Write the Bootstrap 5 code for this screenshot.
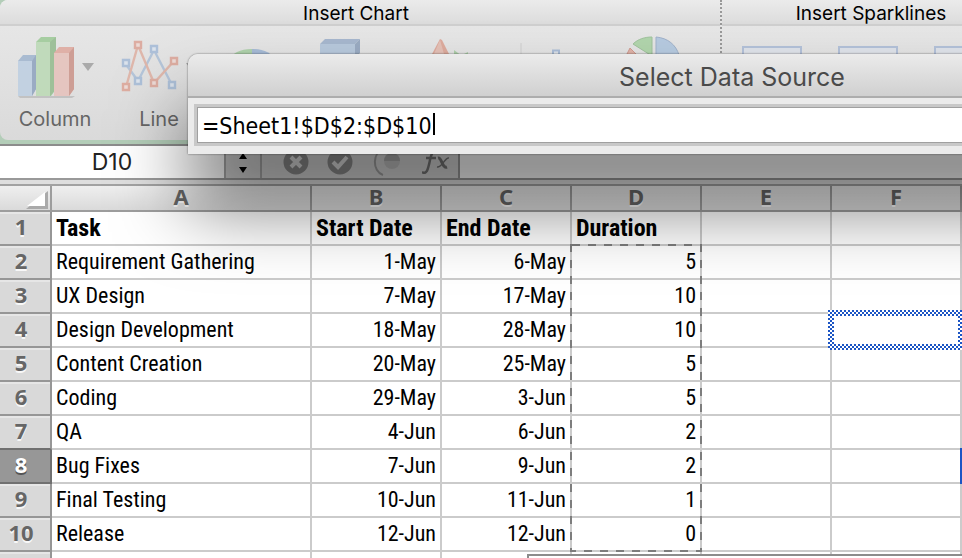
<!DOCTYPE html>
<html lang="en">
<head>
<meta charset="utf-8">
<meta name="viewport" content="width=device-width, initial-scale=1">
<title>Select Data Source</title>
<link href="https://cdn.jsdelivr.net/npm/bootstrap@5.3.0/dist/css/bootstrap.min.css" rel="stylesheet">
<style>
body{font-family:Inter,"Liberation Sans",sans-serif;color:#000}
.app{height:100vh}
.ribbon{background:#b3cdb8;border-bottom:2px solid #8c8c8c;height:146px;padding-bottom:4px}
.ribbon-groups{background:linear-gradient(#e9e9e9,#dadada);border-radius:8px;overflow:hidden;min-width:1020px}
.group-chart{flex:0 0 720px;min-width:0;overflow:hidden}
.group-spark{flex:1 0 300px;border-left:2px dotted #999}
.group-title{height:26px;font-size:19px;line-height:28px;background:linear-gradient(#ebebeb,#dcdcdc);border-bottom:2px solid #cfcfcf}
.tool{flex:0 0 104px;background:none;border:0;padding:10px 0 0 4px;color:#666;font-size:20px;line-height:26px}
.tool .glyph{width:60px;height:62px;overflow:visible;opacity:.9}
.tool .arrow{width:12px;height:8px;margin-left:6px}
.tool-text{width:78px;padding-top:8px}
.formula-bar{height:34px;border-bottom:2px solid #999;background:#fff}
.name-box{width:224px;font-size:23px;padding-top:2px;color:#222}
.spin{width:38px;background:#d4d4d4;border:0;border-left:2px solid #a8a8a8;border-right:2px solid #a8a8a8}
.fx-tools{width:198px;background:#d6d6d6;border-right:2px solid #999;padding-left:20px}
.fx-tools button{width:28px;height:28px}
.splitter{height:6px;background:#dedede;border-bottom:2px solid #a2a2a2}
.sheet{table-layout:fixed;border-collapse:separate;border-spacing:0;font:22px/32px "Roboto Condensed",Roboto,sans-serif}
.sheet td,.sheet .field{height:34px;border-right:2px solid #cbcbcb;border-bottom:2px solid #cbcbcb;padding:0 4px;white-space:nowrap;background:#fff}
.sheet .field{font-size:24px}
.sheet td.num{text-align:right}
.sheet .letter{height:26px;background:linear-gradient(#efefef,#dadada);border-right:2px solid #9d9d9d;border-bottom:2px solid #9d9d9d}
.sheet .letter,.sheet .rownum{font:bold 22px/20px "Noto Sans","Open Sans",sans-serif;color:#666;text-align:center;padding:0 0 4px;text-shadow:0 2px 0 #f8f8f8}
.sheet .rownum{height:34px;line-height:28px;background:#d9d9d9;border-right:2px solid #969696;border-bottom:2px solid #969696;padding-right:8px;box-shadow:inset 0 2px #e6e6e6}
.sheet .before-active{border-bottom-color:#707070}
.sheet .active-row{background:#979797;color:#fff;text-shadow:0 2px 0 #555;border-color:#707070;box-shadow:none}
.c-head{width:52px}.c-task{width:260px}.c-col{width:130px}
.corner{width:22px;height:18px;margin:4px 2px 0 auto}
.sheet .corner-cell{padding:0}
.ants{left:-2px;top:-2px;width:132px;height:308px;z-index:1}
.target{left:-4px;top:-4px;width:136px;height:40px;z-index:1}
.edge-mark{right:-2px;top:-2px;width:2px;height:36px;background:#1c55c4}
.dialog-sheet{left:188px;right:-314px;top:54px;background:#ebebeb;border-radius:10px 10px 0 0;box-shadow:0 0 2px rgba(0,0,0,.6),0 54px 72px rgba(0,0,0,.5);padding-bottom:8px;z-index:5}
.dialog-title{height:44px;font-size:25px;line-height:46px;font-weight:400;color:#4a4a4a;background:linear-gradient(#ebebeb,#d0d0d0);border-bottom:2px solid #adadad;border-radius:10px 10px 0 0}
.range-box{margin:6px 6px 0;border:3px solid #c8c8c8;height:42px}
.range-box input{width:100%;height:100%;border:1px solid #a0a0a0;padding:2px 4px 0;font:23px/30px "DejaVu Sans Condensed","DejaVu Sans",sans-serif;color:#000;outline:0}
.caret{left:236px;top:6px;width:2px;height:22px;background:#000}
.lower-panel{left:527px;right:-20px;top:554px;height:20px;border:2px solid #8c8c8c;background:#fff;z-index:4}
</style>
<script src="https://cdn.jsdelivr.net/npm/bootstrap@5.3.0/dist/js/bootstrap.bundle.min.js"></script>
</head>
<body class="overflow-hidden">
<main class="app position-relative overflow-hidden">
  <header class="ribbon overflow-hidden">
    <div class="ribbon-groups d-flex h-100">
      <section class="group-chart">
        <div class="group-title text-center pe-2">Insert Chart</div>
        <div class="d-flex ps-2 ms-1">
          <button class="tool d-flex flex-column">
            <span class="d-flex align-items-center">
              <svg class="glyph" viewBox="0 0 60 62">
                <path d="M2 60h57l-3 2H4z" fill="#aaa" opacity=".6"/>
                <path d="M2 25l5-6h13v34l-4 7H2z" fill="#a3b7d0"/><path d="M2 25h14v35H2z" fill="#bfd0e2"/><path d="M16 25l4-6v34l-4 7z" fill="#93a6c0"/>
                <path d="M20 6l5-5h15v52l-5 7H20z" fill="#a0cb9a"/><path d="M20 6h14v54H20z" fill="#bddab7"/><path d="M34 6l6-5v52l-6 7z" fill="#97bd92"/>
                <path d="M38 17l5-6h15v42l-5 7H38z" fill="#dfaba1"/><path d="M38 17h15v43H38z" fill="#e6c3bd"/><path d="M53 17l5-6v42l-5 7z" fill="#cc978d"/>
              </svg>
              <svg class="arrow" viewBox="0 0 12 8"><path d="M0 0h12L6 8z" fill="#aaa"/></svg>
            </span>
            <span class="tool-text text-center">Column</span>
          </button>
          <button class="tool d-flex flex-column">
            <span class="d-flex align-items-center">
              <svg class="glyph" viewBox="0 0 60 62" fill="none" stroke-width="2.4">
                <path d="M5 27l13 18L34 14l18 35" stroke="#b0c2d9"/><path d="M6 51L18 9l16 38 20-22" stroke="#dfb3a6"/>
                <g fill="#dce4ee" stroke="#a8bdd8"><path d="M3 24h6v6H3zM15 42h6v6h-6zM31 10h6v6h-6zM49 46h6v6h-6z"/></g>
                <g fill="#eedbd6" stroke="#dda89b"><path d="M3 48h6v6H3zM15 6h6v6h-6zM31 44h6v6h-6zM51 22h6v6h-6z"/></g>
              </svg>
              <svg class="arrow" viewBox="0 0 12 8"><path d="M0 0h12L6 8z" fill="#aaa"/></svg>
            </span>
            <span class="tool-text text-center">Line</span>
          </button>
          <button class="tool d-flex" aria-label="Pie">
            <svg class="glyph" viewBox="0 0 60 62"><path d="M28 38V13C16 13 8 17 4 25z" fill="#a9cfa5"/><path d="M28 38V13c12 0 20 4 24 12z" fill="#9fb6d4"/><path d="M28 38L4 22v16z" fill="#dca79c"/></svg>
          </button>
          <button class="tool d-flex" aria-label="Bar">
            <svg class="glyph" viewBox="0 0 60 62"><path d="M-8 8l5-5h35l-5 5z" fill="#a0b3cc"/><path d="M-8 8h35v14H-8z" fill="#b3c6dc"/><path d="M27 8l5-5v14l-5 5z" fill="#92a5bf"/></svg>
          </button>
          <button class="tool d-flex" aria-label="Area">
            <svg class="glyph" viewBox="0 0 60 62"><path d="M0 18L8 3l2 1 7 14z" fill="#dda596"/><path d="M2 18L8 4l4 14z" fill="#e5bdb2"/><path d="M22 14l8 6h-8zM36 16l-4 2h4z" fill="#a9cda5"/></svg>
          </button>
          <button class="tool d-flex" aria-label="Scatter">
            <svg class="glyph" viewBox="0 0 60 62"><path d="M-15 7v20" stroke="#ccc"/><path d="M17 14.500h6v6h-6z" fill="#e1e7ef" stroke="#a3b8d5" stroke-width="2"/></svg>
          </button>
          <button class="tool d-flex" aria-label="Other">
            <svg class="glyph" viewBox="0 0 60 62"><path d="M12 20L-7 8C-2 3 5 1 12 1z" fill="#acd4a7" stroke="#98bf95"/><path d="M16 20V1c12 1 20 8 23 18z" fill="#b2c8e0" stroke="#98acc8"/><path d="M-14 20l4-8 9 9z" fill="#e0aea2" stroke="#ce9487"/></svg>
          </button>
        </div>
      </section>
      <section class="group-spark">
        <div class="group-title text-center">Insert Sparklines</div>
        <div class="d-flex ps-3">
          <svg width="250" height="60" fill="#dfe3ea" stroke="#b3c1d9" stroke-width="2"><path d="M5 21h58v38H5zM101 21h58v38h-58zM197 21h58v38h-58z"/></svg>
        </div>
      </section>
    </div>
  </header>

  <div class="formula-bar d-flex">
    <input class="name-box border-0 text-center" value="D10" aria-label="Name box">
    <button class="spin flex-shrink-0 p-0" aria-label="Name list"><svg width="10" height="24" viewBox="0 0 10 24"><path d="M1 8l4-6 4 6zM1 16h8l-4 6z"/></svg></button>
    <div class="fx-tools d-flex align-items-center flex-shrink-0">
      <button class="border-0 bg-transparent p-0" aria-label="Cancel"><svg width="26" height="26" viewBox="0 0 26 26"><circle cx="13" cy="13" r="12.500" fill="#8d8d8d"/><path d="M8 8l10 10M18 8L8 18" stroke="#dedede" stroke-width="4"/></svg></button>
      <button class="border-0 bg-transparent p-0 ms-3" aria-label="Enter"><svg width="26" height="26" viewBox="0 0 26 26"><circle cx="13" cy="13" r="12.500" fill="#8d8d8d"/><path d="M6 13l5 5 9-10" fill="none" stroke="#dedede" stroke-width="4"/></svg></button>
      <button class="border-0 bg-transparent p-0 ms-3" aria-label="Formula options"><svg width="36" height="28" viewBox="0 0 36 28"><path d="M14 1C2 4 2 23 13 27" fill="none" stroke="#a0a0a0" stroke-width="2"/><circle cx="22" cy="13" r="8" fill="#c2c2c2"/><path d="M14 13h16a8 8 0 0 0-16 0z" fill="#aaa"/></svg></button>
      <button class="border-0 bg-transparent p-0 ms-4" aria-label="Function"><svg width="28" height="26" viewBox="0 0 28 26" fill="none" stroke="#777"><path d="M0 23c5 3 6-3 8-12S12 0 17 3M4 9h10" stroke-width="2.500"/><path d="M16 9c4-1 4 11 9 9" stroke-width="3"/><path d="M27 9c-4-1-7 10-12 9" stroke-width="1.500"/></svg></button>
    </div>
    <input class="flex-grow-1 border-0" aria-label="Formula bar">
  </div>
  <div class="splitter"></div>

  <table class="sheet w-100">
    <colgroup><col class="c-head"><col class="c-task"><col class="c-col"><col class="c-col"><col class="c-col"><col class="c-col"><col></colgroup>
    <thead>
      <tr><th class="letter corner-cell"><svg class="corner d-block" viewBox="0 0 22 18"><path d="M0 18L22 0v18z" fill="#aaa"/><path d="M1 15L19 1v14z" fill="#fff"/></svg></th><th class="letter">A</th><th class="letter">B</th><th class="letter">C</th><th class="letter">D</th><th class="letter">E</th><th class="letter">F</th></tr>
    </thead>
    <tbody>
      <tr><th class="rownum">1</th><th class="field">Task</th><th class="field">Start Date</th><th class="field">End Date</th><th class="field">Duration</th><td></td><td></td></tr>
      <tr><th class="rownum">2</th><td>Requirement Gathering</td><td class="num">1-May</td><td class="num">6-May</td><td class="num position-relative">5<svg class="ants position-absolute" viewBox="0 0 132 308"><path d="M1 0v307h130V0M2 1h129" fill="none" stroke="#7d7d7d" stroke-width="2" stroke-dasharray="8 8"/></svg></td><td></td><td></td></tr>
      <tr><th class="rownum">3</th><td>UX Design</td><td class="num">7-May</td><td class="num">17-May</td><td class="num">10</td><td></td><td></td></tr>
      <tr><th class="rownum">4</th><td>Design Development</td><td class="num">18-May</td><td class="num">28-May</td><td class="num">10</td><td></td><td class="position-relative"><svg class="target position-absolute" viewBox="0 0 136 40" shape-rendering="crispEdges"><defs><pattern id="checks" width="4" height="4" patternUnits="userSpaceOnUse"><path d="M0 0h4v4H0z" fill="#fff"/><path d="M0 0h2v2H0zM2 2h2v2H2z" fill="#1c55c4"/></pattern></defs><path d="M0 0h136v40H0zM6 6v28h124V6z" fill="url(#checks)" fill-rule="evenodd"/></svg></td></tr>
      <tr><th class="rownum">5</th><td>Content Creation</td><td class="num">20-May</td><td class="num">25-May</td><td class="num">5</td><td></td><td></td></tr>
      <tr><th class="rownum">6</th><td>Coding</td><td class="num">29-May</td><td class="num">3-Jun</td><td class="num">5</td><td></td><td></td></tr>
      <tr><th class="rownum before-active">7</th><td>QA</td><td class="num">4-Jun</td><td class="num">6-Jun</td><td class="num">2</td><td></td><td></td></tr>
      <tr><th class="rownum active-row">8</th><td>Bug Fixes</td><td class="num">7-Jun</td><td class="num">9-Jun</td><td class="num">2</td><td></td><td class="position-relative"><span class="edge-mark position-absolute"></span></td></tr>
      <tr><th class="rownum">9</th><td>Final Testing</td><td class="num">10-Jun</td><td class="num">11-Jun</td><td class="num">1</td><td></td><td></td></tr>
      <tr><th class="rownum">10</th><td>Release</td><td class="num">12-Jun</td><td class="num">12-Jun</td><td class="num">0</td><td></td><td></td></tr>
      <tr><th class="rownum"></th><td></td><td></td><td></td><td></td><td></td><td></td></tr>
    </tbody>
  </table>

  <section class="dialog-sheet position-absolute" role="dialog" aria-labelledby="dialog-name">
    <h1 class="dialog-title text-center m-0" id="dialog-name">Select Data Source</h1>
    <div class="range-box position-relative"><input value="=Sheet1!$D$2:$D$10" aria-label="Data range"><span class="caret position-absolute"></span></div>
  </section>
  <div class="lower-panel position-absolute"></div>
</main>
</body>
</html>
